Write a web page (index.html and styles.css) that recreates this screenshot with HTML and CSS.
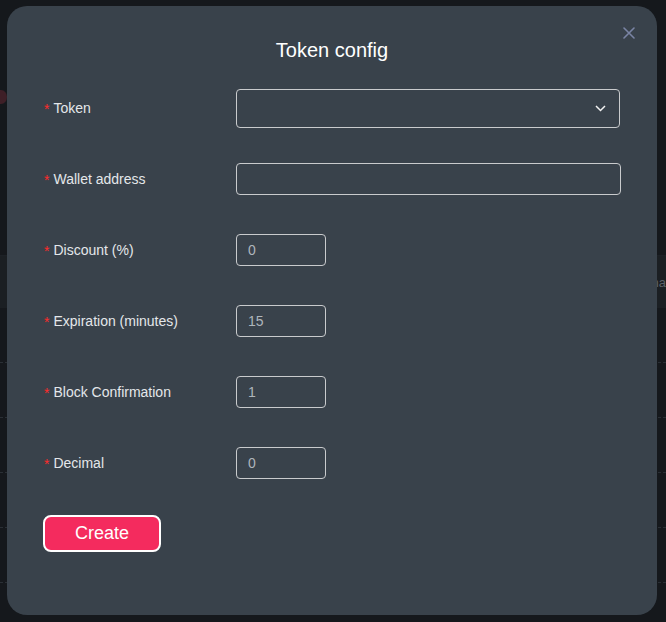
FILE: index.html
```html
<!DOCTYPE html>
<html lang="en">
<head>
<meta charset="utf-8">
<title>Token config</title>
<link rel="stylesheet" href="styles.css">
</head>
<body>
<div class="page">
  <div class="bg-header"><span class="bg-dot"></span></div>
  <div class="bg-band"><span class="bg-text">na</span></div>
  <div class="bg-row"></div>
  <div class="bg-row"></div>
  <div class="bg-row"></div>
  <div class="bg-row"></div>
  <div class="bg-row"></div>
</div>

<div class="overlay">
  <div class="modal">
    <button class="close" aria-label="Close">
      <svg width="12" height="12" viewBox="0 0 12 12"><path d="M1 1L11 11M11 1L1 11" stroke="#7a84a4" stroke-width="1.6" stroke-linecap="round"/></svg>
    </button>
    <h2 class="title">Token config</h2>
    <form class="form">
      <div class="row">
        <label class="label"><span class="req">*</span>Token</label>
        <div class="select">
          <svg class="chev" width="11" height="7" viewBox="0 0 11 7"><path d="M1 1L5.5 5.5L10 1" fill="none" stroke="#f2f2f2" stroke-width="1.5"/></svg>
        </div>
      </div>
      <div class="row">
        <label class="label"><span class="req">*</span>Wallet address</label>
        <input class="input wide" type="text" value="">
      </div>
      <div class="row">
        <label class="label"><span class="req">*</span>Discount (%)</label>
        <input class="input small" type="text" value="0">
      </div>
      <div class="row">
        <label class="label"><span class="req">*</span>Expiration (minutes)</label>
        <input class="input small" type="text" value="15">
      </div>
      <div class="row">
        <label class="label"><span class="req">*</span>Block Confirmation</label>
        <input class="input small" type="text" value="1">
      </div>
      <div class="row">
        <label class="label"><span class="req">*</span>Decimal</label>
        <input class="input small" type="text" value="0">
      </div>
      <button class="create" type="button">Create</button>
    </form>
  </div>
</div>
</body>
</html>
```

FILE: styles.css
```css
* { box-sizing: border-box; }

html, body {
  margin: 0;
  padding: 0;
  width: 666px;
  height: 622px;
  overflow: hidden;
  background: #15181c;
  font-family: "Liberation Sans", Arial, sans-serif;
}

.page {
  width: 666px;
  height: 622px;
  display: flex;
  flex-direction: column;
}

.bg-header {
  height: 256px;
  border-bottom: 1px solid #1d2126;
  padding-top: 90px;
}

.bg-dot {
  display: block;
  width: 12px;
  height: 14px;
  margin-left: -5px;
  border-radius: 50%;
  background: #3e1f27;
}

.bg-band {
  height: 52px;
  background: #1b1f23;
  display: flex;
  align-items: center;
  justify-content: flex-end;
  overflow: hidden;
}

.bg-text {
  color: #5d6268;
  font-size: 13px;
  margin-right: 0;
}

.bg-row {
  height: 55px;
  border-bottom: 1px dashed #2a2f35;
}

.overlay {
  position: fixed;
  inset: 0;
  display: flex;
  padding: 6px 9px 7px 7px;
}

.modal {
  position: relative;
  width: 650px;
  height: 609px;
  background: #39424b;
  border-radius: 20px;
  padding: 32px 37px 0 36px;
}

.close {
  position: absolute;
  top: 20px;
  right: 21px;
  width: 14px;
  height: 14px;
  padding: 0;
  border: 0;
  background: none;
  display: flex;
  align-items: center;
  justify-content: center;
  cursor: pointer;
}

.title {
  margin: 0;
  text-align: center;
  font-weight: normal;
  font-size: 20px;
  line-height: 24px;
  color: #ffffff;
  padding-left: 1px;
  height: 34px;
}

.form {
  display: flex;
  flex-direction: column;
}

.row {
  display: grid;
  grid-template-columns: 193px 1fr;
  align-items: center;
  height: 71px;
}

.label {
  color: #e4e7ea;
  font-size: 14px;
  line-height: 16px;
  padding-left: 1px;
  display: flex;
  align-items: center;
}

.req {
  color: #ff2a2a;
  font-size: 14px;
  margin-right: 4px;
  line-height: 16px;
  position: relative;
  top: 1px;
}

.select {
  height: 39px;
  margin-top: 2px;
  border: 1px solid #c9cbcd;
  border-radius: 4px;
  display: flex;
  align-items: center;
  justify-content: flex-end;
  padding-right: 13px;
}

.input {
  height: 32px;
  border: 1px solid #c9cbcd;
  border-radius: 4px;
  background: transparent;
  color: #aeb5bc;
  font-family: "Liberation Sans", Arial, sans-serif;
  font-size: 14px;
  padding: 0 11px;
  outline: none;
}

.input.wide { width: 385px; }
.input.small { width: 90px; }

.create {
  margin-top: 17px;
  align-self: flex-start;
  width: 118px;
  height: 37px;
  background: #f42b5e;
  border: 2px solid #ffffff;
  border-radius: 8px;
  color: #ffffff;
  font-family: "Liberation Sans", Arial, sans-serif;
  font-size: 18px;
  cursor: pointer;
}
```
